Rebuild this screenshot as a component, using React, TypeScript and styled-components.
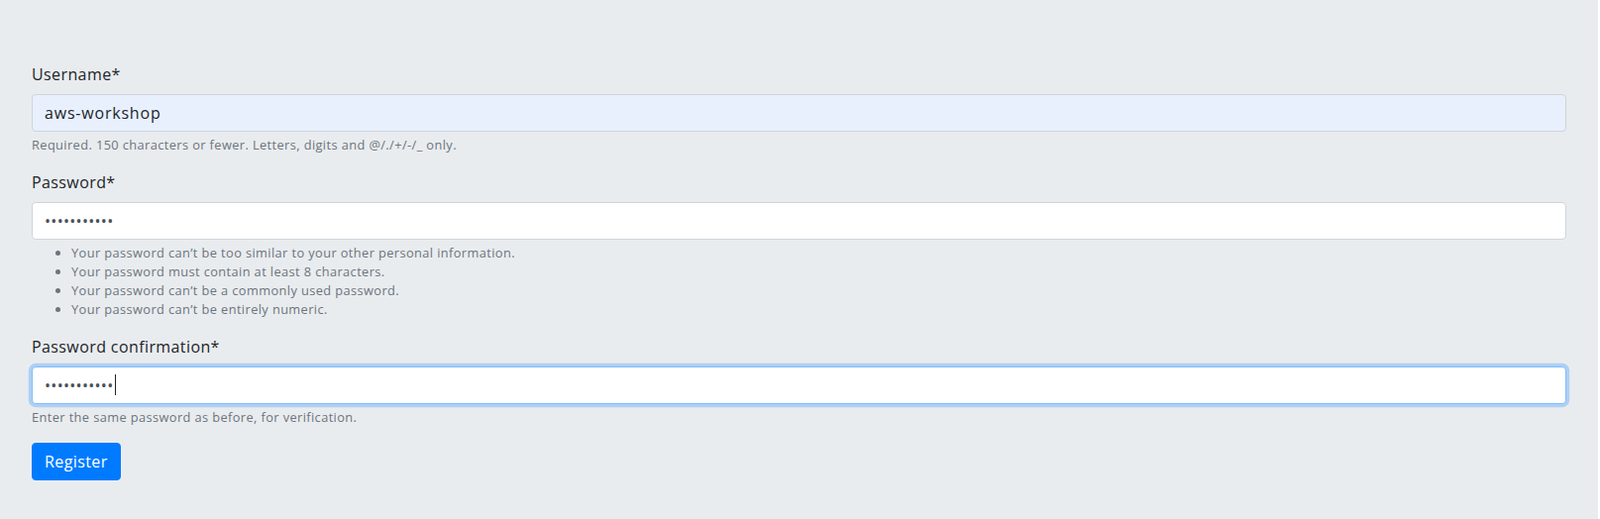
import React from "react";
import styled, { createGlobalStyle, css } from "styled-components";

const GlobalStyle = createGlobalStyle`
  html, body {
    margin: 0;
    background: #ffffff;
  }
  body {
    font-family: "Open Sans", "Liberation Sans", sans-serif;
    font-size: 16px;
    line-height: 1.5;
    color: #212529;
  }
  * {
    box-sizing: border-box;
  }
`;

const Panel = styled.div`
  min-height: 524px;
  margin-right: 2px;
  padding: 63px 32px 40px;
  background: #e9ecef;
`;

const Form = styled.form`
  display: flex;
  flex-direction: column;
  align-items: flex-start;
`;

const FormGroup = styled.div`
  width: 100%;
  margin-bottom: 16px;
`;

const Label = styled.label`
  display: block;
  margin-bottom: 8px;
  font-size: 16px;
  line-height: 24px;
  letter-spacing: 0.4px;
  color: #212529;
`;

const InputWrap = styled.div`
  position: relative;
  width: 100%;
`;

const Input = styled.input<{ $autofill?: boolean; $focused?: boolean }>`
  display: block;
  width: 100%;
  height: 38px;
  padding: 6px 12px;
  font-family: inherit;
  font-size: 16px;
  line-height: 1.5;
  letter-spacing: 0.3px;
  color: #495057;
  background: #ffffff;
  border: 1px solid #ced4da;
  border-radius: 4px;
  outline: none;

  ${(p) =>
    p.$autofill &&
    css`
      color: #212529;
      letter-spacing: 0.8px;
      background: #e8f0fe;
    `}

  ${(p) =>
    p.$focused &&
    css`
      border-color: #80bdff;
      box-shadow: 0 0 0 3.2px rgba(0, 123, 255, 0.25);
    `}
`;

const Caret = styled.span<{ $left: number }>`
  position: absolute;
  top: 8px;
  left: ${(p) => p.$left}px;
  width: 1px;
  height: 21px;
  background: #212529;
`;

const HelpText = styled.small`
  display: block;
  margin-top: 4px;
  font-size: 12.8px;
  line-height: 1.5;
  letter-spacing: 0.4px;
  color: #6c757d;
`;

const HelpList = styled.ul`
  margin: 0;
  padding-left: 40px;
  list-style: disc;
  line-height: 19px;
`;

const Button = styled.button`
  display: inline-block;
  padding: 6px 12px;
  font-family: inherit;
  font-size: 16px;
  line-height: 1.5;
  letter-spacing: 0.4px;
  color: #ffffff;
  background: #007bff;
  border: 1px solid #007bff;
  border-radius: 4px;
  cursor: pointer;
`;

const passwordRules = [
  "Your password can’t be too similar to your other personal information.",
  "Your password must contain at least 8 characters.",
  "Your password can’t be a commonly used password.",
  "Your password can’t be entirely numeric.",
];

const App = () => {
  return (
    <>
      <GlobalStyle />
      <Panel>
        <Form onSubmit={(e) => e.preventDefault()}>
          <FormGroup>
            <Label htmlFor="id_username">Username*</Label>
            <Input id="id_username" type="text" defaultValue="aws-workshop" $autofill />
            <HelpText>
              Required. 150 characters or fewer. Letters, digits and @/./+/-/_ only.
            </HelpText>
          </FormGroup>

          <FormGroup>
            <Label htmlFor="id_password1">Password*</Label>
            <Input id="id_password1" type="password" defaultValue="aws-worksho" />
            <HelpText>
              <HelpList>
                {passwordRules.map((rule) => (
                  <li key={rule}>{rule}</li>
                ))}
              </HelpList>
            </HelpText>
          </FormGroup>

          <FormGroup>
            <Label htmlFor="id_password2">Password confirmation*</Label>
            <InputWrap>
              <Input id="id_password2" type="password" defaultValue="aws-worksho" $focused />
              <Caret $left={84} />
            </InputWrap>
            <HelpText>Enter the same password as before, for verification.</HelpText>
          </FormGroup>

          <Button type="submit">Register</Button>
        </Form>
      </Panel>
    </>
  );
};

export default App;
